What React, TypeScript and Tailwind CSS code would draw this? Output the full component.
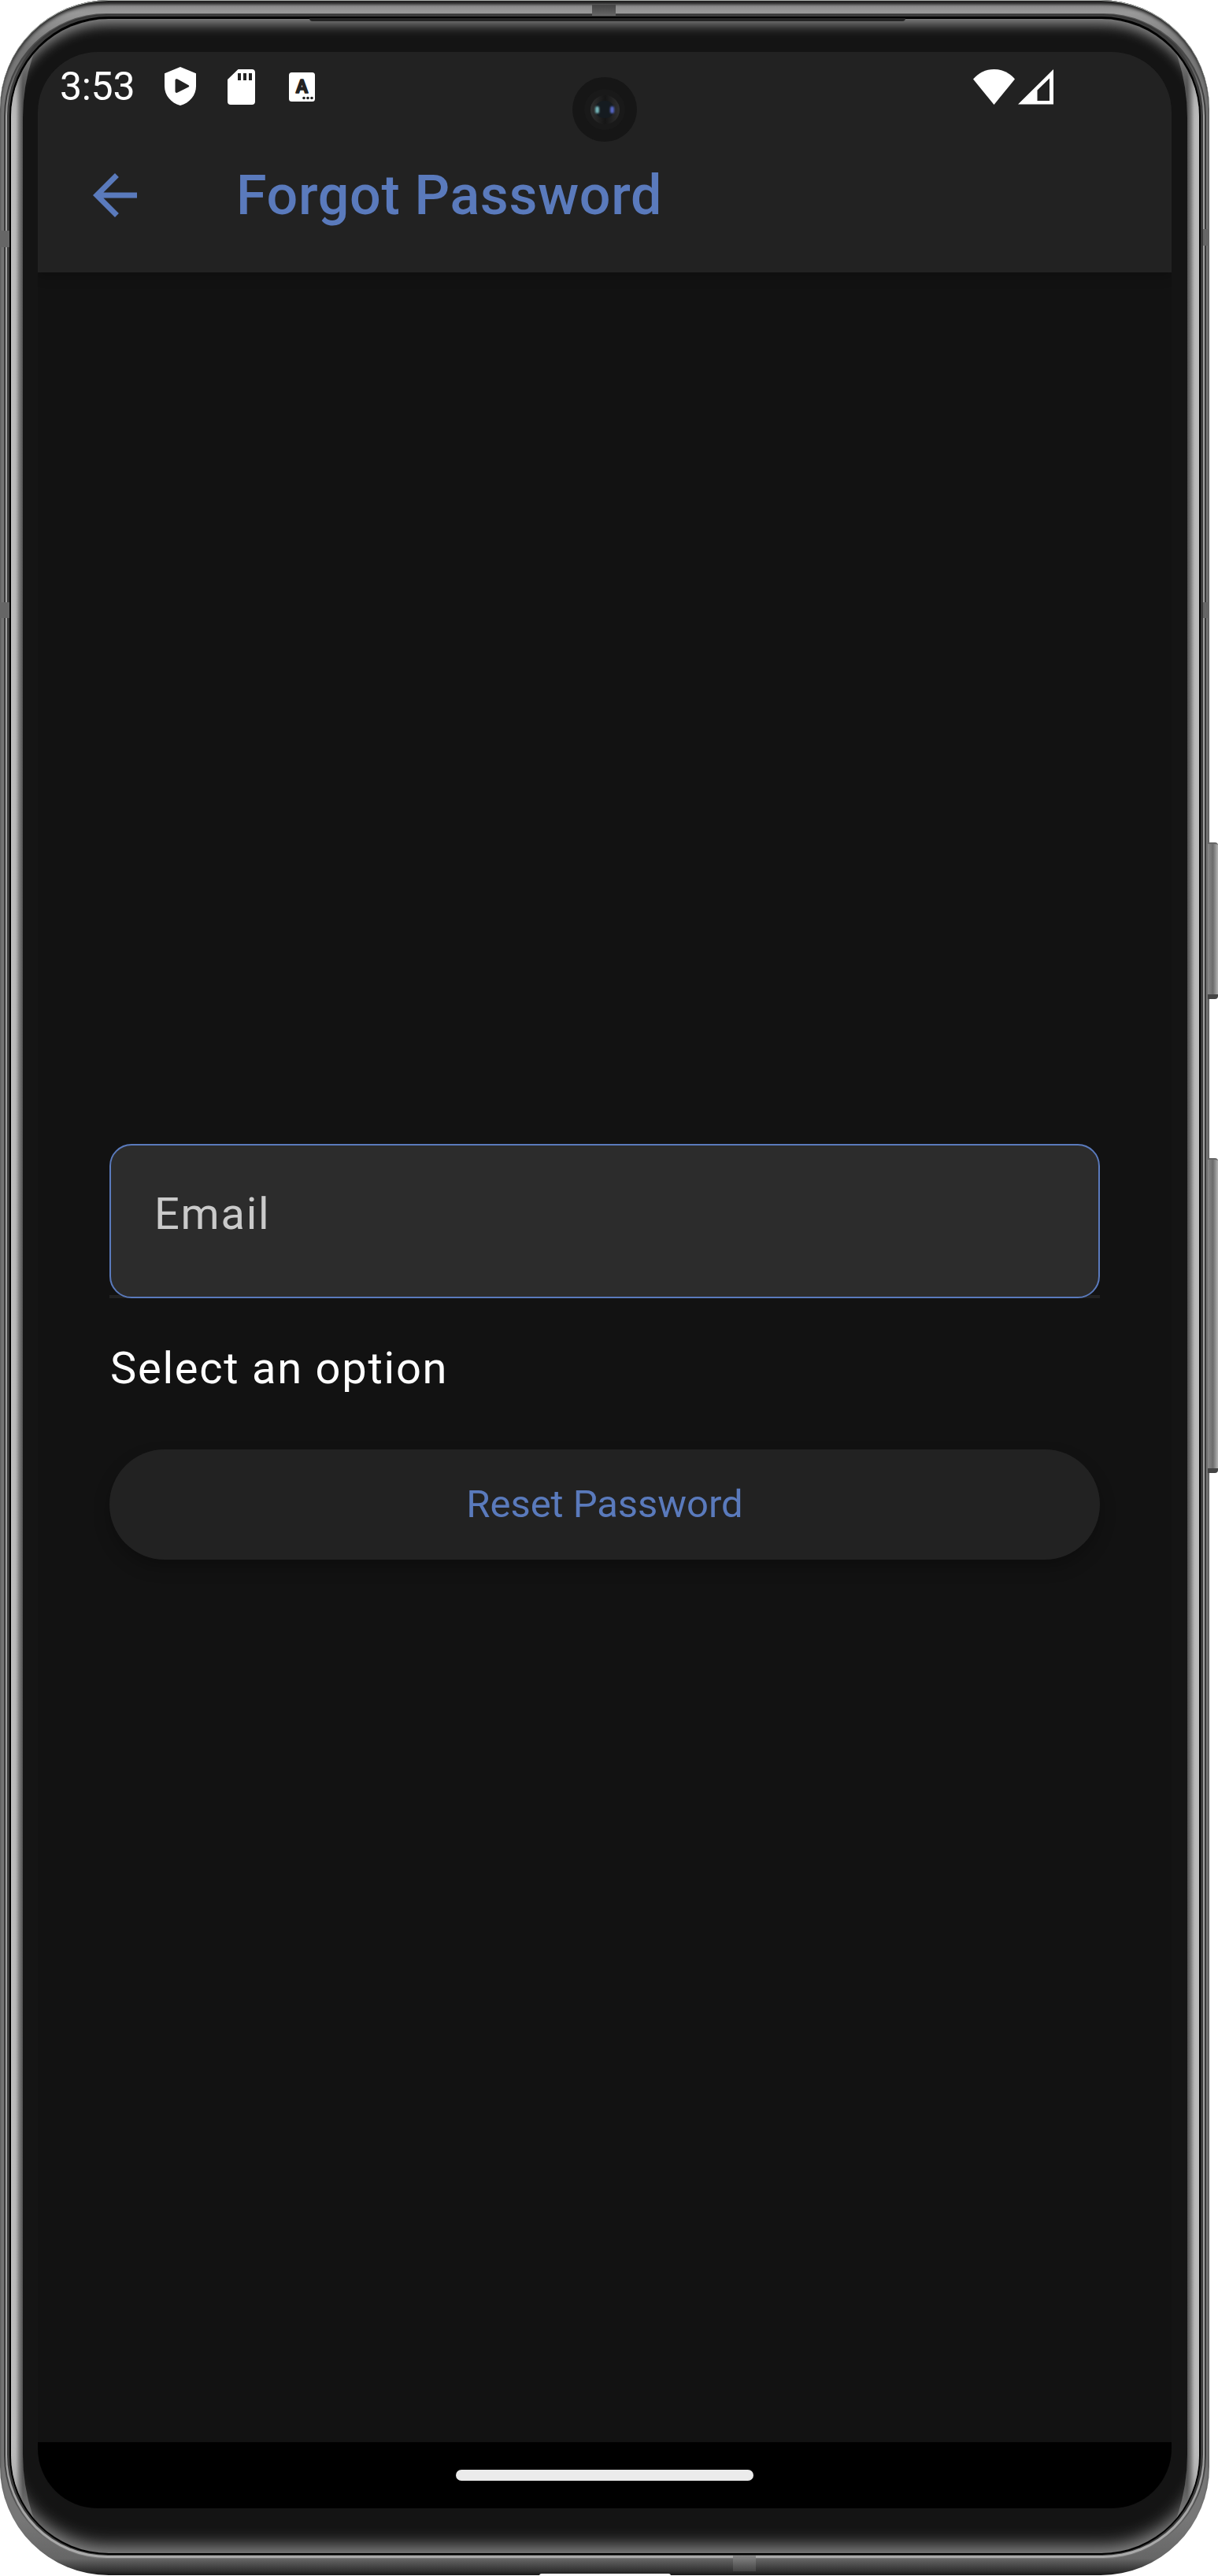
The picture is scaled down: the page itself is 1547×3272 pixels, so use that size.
import type { ReactNode } from "react";

function StatusBar() {
  return (
    <div className="flex h-[84px] items-center pt-1 pr-[150px] pl-7 text-white">
      <span className="w-24 shrink-0 text-[50px] leading-none tracking-[-0.3px]">3:53</span>
      <svg className="ml-[37px] shrink-0" width="40" height="50" viewBox="0 0 40 50">
        <path
          fill="#fff"
          fillRule="evenodd"
          d="M20 0 40 8.200v16.500c0 11-8 21-20 24.300C8 45.700 0 35.700 0 24.700V8.200ZM13.500 17v14c0 1.600 1.500 2.400 3 1.600L30.500 25.500c1-.6 1-1.600 0-2.200L16.500 15.600c-1.500-.8-3-.2-3 1.400Z"
        />
      </svg>
      <svg className="ml-10 shrink-0" width="35" height="45" viewBox="0 0 35 45">
        <path
          fill="#fff"
          fillRule="evenodd"
          d="M13.500 0H31c2.500 0 4 1.500 4 4v37c0 2.500-1.500 4-4 4H4c-2.500 0-4-1.500-4-4V13ZM13 5v9h4V5Zm7 0v9h4V5Zm7 0v9h4V5Z"
        />
      </svg>
      <svg className="ml-[43px] shrink-0" width="33" height="37" viewBox="0 0 33 37">
        <rect width="33" height="37" rx="3.500" fill="#fff" />
        <text
          x="16.500"
          y="26"
          textAnchor="middle"
          fontFamily="Roboto, sans-serif"
          fontWeight="700"
          fontSize="23"
          fill="#222"
          stroke="#222"
          strokeWidth="1.500"
          strokeLinejoin="round"
        >
          A
        </text>
        <g fill="#222">
          <circle cx="19" cy="32.500" r="1.800" />
          <circle cx="24" cy="32.500" r="1.800" />
          <circle cx="29" cy="32.500" r="1.800" />
        </g>
      </svg>
      <svg className="ml-auto shrink-0" width="53" height="45" viewBox="0 0 53 45">
        <path fill="#fff" d="M26.500 45 0 12.500C7 4.500 16 0 26.500 0S46 4.500 53 12.500Z" />
      </svg>
      <svg className="ml-1 shrink-0" width="45" height="45" viewBox="0 0 45 45">
        <path fill="#fff" fillRule="evenodd" d="M0 44.500 45 0v44.500ZM24.500 26.500V40H40V11.500Z" />
      </svg>
    </div>
  );
}

function AppBar() {
  return (
    <div className="flex flex-1 items-center pl-[70px] text-[#5a7abc]">
      <svg className="shrink-0" width="56" height="56" viewBox="0 0 56 56">
        <path
          fill="currentColor"
          d="M56 24.500H13.400L32.900 4.900 28 0 0 28l28 28 4.900-4.900L13.400 31.500H56Z"
        />
      </svg>
      <h1 className="ml-[126px] text-[70px] leading-none font-medium tracking-[0.67px]">Forgot Password</h1>
    </div>
  );
}

function Camera() {
  return (
    <div className="absolute top-[32px] left-[679px] z-20 flex size-[82px] items-center justify-center rounded-full bg-[#161616]">
      <div className="flex size-[52px] items-center justify-center rounded-full bg-[#191919]">
        <div className="flex size-[37px] items-center justify-center rounded-full bg-linear-to-r from-[#303030] via-[#161616] to-[#303030]">
          <div className="flex h-[22px] w-[24px] items-center justify-between rounded-full bg-[#151b20]">
            <div className="h-[9px] w-[5px] rounded-full bg-[#76b5b8] blur-[1px]" />
            <div className="h-[9px] w-[5px] rounded-full bg-[#5868c4] blur-[1px]" />
          </div>
        </div>
      </div>
    </div>
  );
}

function Screen() {
  return (
    <div className="relative flex h-[3120px] w-[1440px] flex-col overflow-hidden rounded-[76px] bg-[#121212]">
      <header className="z-10 flex h-[280px] flex-col bg-[#222222] shadow-[0_6px_14px_rgba(0,0,0,0.2)]">
        <StatusBar />
        <AppBar />
      </header>
      <main className="flex flex-1 flex-col px-[91px] pt-[1107px]">
        <div className="h-[196px] bg-[linear-gradient(to_top,#222_4px,transparent_4px)]">
          <div className="h-full rounded-[28px] border-2 border-[#5a7abc] bg-[#2c2c2c] pt-[55px] pl-[55px] text-[56px] leading-[64px] tracking-[1.75px] text-[#cacaca]">
            Email
          </div>
        </div>
        <p className="mt-[57px] pl-px text-[56px] leading-[64px] tracking-[1.75px] text-white">Select an option</p>
        <button className="mt-[71px] h-[140px] rounded-full bg-[#222222] text-[49px] tracking-[-0.05px] text-[#5a7abc] shadow-[0_10px_20px_rgba(0,0,0,0.25)]">
          Reset Password
        </button>
      </main>
      <nav className="flex h-[84px] items-center justify-center bg-black">
        <div className="h-[14px] w-[378px] rounded-full bg-[#ebebeb]" />
      </nav>
      <Camera />
    </div>
  );
}

function Glass({ children }: { children: ReactNode }) {
  return (
    <div className="relative h-full overflow-hidden rounded-[124px] bg-[linear-gradient(to_right,#d2d2d2_0,#bbb_6px,#777_11px,#505050_15px,#808080_40px,#808080_1469px,#505050_1494px,#777_1498px,#bbb_1503px,#d2d2d2_1509px)]">
      <div className="absolute inset-x-[15px] -inset-y-[74px] rounded-[157px/200px] bg-[#141414]" />
      <div className="absolute inset-0 rounded-[124px] shadow-[inset_0_15px_16px_-8px_#8c8c8c,inset_0_-20px_22px_-11px_#8c8c8c]" />
      <div className="relative flex justify-center pt-[42px] pr-px">{children}</div>
    </div>
  );
}

function SideKey({ className }: { className: string }) {
  return (
    <div
      className={
        "absolute right-0 w-[13px] rounded-r-[4px] border-t-2 border-b-[6px] border-t-[#666] border-b-[#444] bg-linear-to-r from-[#888] via-[#6c6c6c] to-[#b4b4b4] " +
        className
      }
    />
  );
}

export default function App() {
  return (
    <div
      className="relative h-[3272px] w-[1547px] overflow-hidden bg-white"
      style={{ fontFamily: "Roboto, sans-serif" }}
    >
      <SideKey className="top-[1070px] h-[199px]" />
      <SideKey className="top-[1471px] h-[400px]" />
      <div className="h-[3271px] w-[1536px] rounded-[138px] bg-[linear-gradient(to_bottom,#333_2px,#8c8c8c_8px,#999_16px,#777_60px,#777_3200px,#666_3250px,#303030_3266px,#1a1a1a_3270px)] pt-[17px] pr-1 pb-[21px] pl-[5px] shadow-[inset_0_1px_0_#b0b4b0,inset_0_5px_4px_-1px_#1c1c1c]">
        <div className="h-full rounded-[130px] bg-[linear-gradient(to_bottom,#555,#3a3a3a_120px,#3a3a3a_3100px,#777)] px-0.5 py-px">
          <div className="h-full rounded-[129px] bg-[linear-gradient(to_bottom,#333,#3c3c3c_40px,#a0a0a0_130px,#a0a0a0_3100px,#aaa)] px-0.5 pt-px pb-[3px]">
            <div className="h-full rounded-[128px] bg-[#3c3c3c] px-[3px] pt-0.5 pb-px">
              <div className="h-full rounded-[126px] bg-black px-0.5 pt-[3px] pb-0.5">
                <Glass>
                  <Screen />
                </Glass>
              </div>
            </div>
          </div>
        </div>
      </div>
      <div className="absolute top-[23px] left-[393px] h-1 w-[757px] rounded-b-full bg-[#242424]" />
      <div className="absolute top-[6px] left-[752px] h-[14px] w-[30px] bg-linear-to-b from-[#444] to-[#666]" />
      <div className="absolute top-[3246px] left-[931px] h-[20px] w-[29px] bg-linear-to-b from-[#888] to-[#444]" />
      <div className="absolute top-[293px] left-0 h-[21px] w-[12px] bg-[#666]" />
      <div className="absolute top-[765px] left-0 h-[20px] w-[12px] bg-[#666]" />
      <div className="absolute top-[291px] left-[1528px] h-[21px] w-[8px] bg-[#666]" />
      <div className="absolute top-[765px] left-[1528px] h-[20px] w-[8px] bg-[#666]" />
      <div className="absolute top-[3269px] left-[685px] h-[3px] w-[167px] rounded-t-full bg-white" />
    </div>
  );
}
